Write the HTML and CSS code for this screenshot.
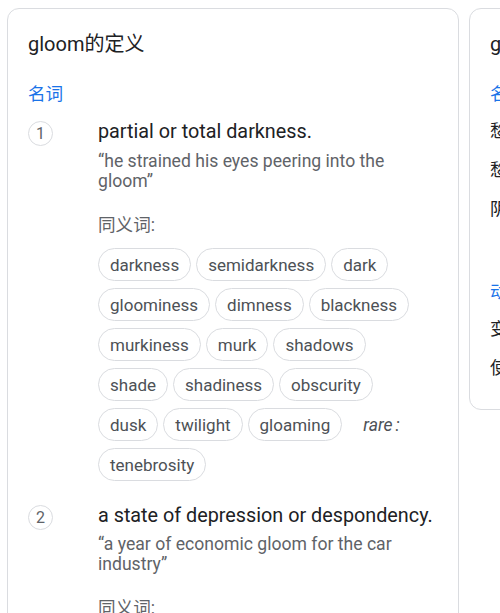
FILE: index.html
```html
<!DOCTYPE html>
<html lang="zh-CN">
<head>
<meta charset="utf-8">
<title>gloom的定义</title>
<link rel="stylesheet" href="styles.css">
</head>
<body>
<div class="cards">
  <section class="card main">
    <h2 class="title">gloom的定义</h2>
    <div class="pos">名词</div>
    <ol class="senses">
      <li class="sense">
        <span class="num">1</span>
        <div class="body">
          <div class="def">partial or total darkness.</div>
          <div class="ex">“he strained his eyes peering into the gloom”</div>
          <div class="syn-label">同义词:</div>
          <div class="chips">
            <span class="chip">darkness</span>
            <span class="chip">semidarkness</span>
            <span class="chip">dark</span>
            <span class="chip">gloominess</span>
            <span class="chip">dimness</span>
            <span class="chip">blackness</span>
            <span class="chip">murkiness</span>
            <span class="chip">murk</span>
            <span class="chip">shadows</span>
            <span class="chip">shade</span>
            <span class="chip">shadiness</span>
            <span class="chip">obscurity</span>
            <span class="chip">dusk</span>
            <span class="chip">twilight</span>
            <span class="chip">gloaming</span>
            <span class="rare">rare<span class="colon">:</span></span>
            <span class="chip">tenebrosity</span>
          </div>
        </div>
      </li>
      <li class="sense">
        <span class="num">2</span>
        <div class="body">
          <div class="def">a state of depression or despondency.</div>
          <div class="ex ex2">“a year of economic gloom for the car industry”</div>
          <div class="syn-label">同义词:</div>
        </div>
      </li>
    </ol>
  </section>
  <section class="card side">
    <h2 class="title">gloom的翻译</h2>
    <div class="pos">名词</div>
    <ul class="trans">
      <li>愁闷</li>
      <li>愁苦</li>
      <li>阴暗</li>
    </ul>
    <div class="pos pos2">动词</div>
    <ul class="trans">
      <li>变得忧郁</li>
      <li>使忧郁</li>
    </ul>
  </section>
</div>
</body>
</html>
```

FILE: styles.css
```css
html, body {
  margin: 0;
  padding: 0;
  background: #fff;
  overflow: hidden;
}
body {
  font-family: Roboto, "Noto Sans CJK SC", sans-serif;
  color: #202124;
}
.cards {
  display: flex;
  align-items: flex-start;
  gap: 10px;
  padding: 8px 0 0 7px;
  width: 800px;
}
.card {
  box-sizing: border-box;
  border: 1px solid #dadce0;
  border-radius: 12px;
  background: #fff;
  padding: 20px;
  flex: none;
}
.main {
  width: 452px;
  height: 700px;
}
.side {
  width: 220px;
  height: 402px;
}
.title {
  margin: 0;
  font-weight: 400;
  font-size: 20px;
  line-height: 30px;
  color: #202124;
}
.pos {
  margin-top: 23px;
  font-size: 17.6px;
  line-height: 24px;
  color: #1a73e8;
}
.senses {
  list-style: none;
  margin: 14px 0 0 0;
  padding: 0;
}
.sense {
  display: flex;
  margin-bottom: 23px;
}
.num {
  box-sizing: border-box;
  flex: none;
  width: 25px;
  height: 25px;
  border: 1px solid #dadce0;
  border-radius: 50%;
  display: flex;
  align-items: center;
  justify-content: center;
  font-size: 16px;
  color: #5f6368;
  margin-top: 1px;
  margin-right: 45px;
}
.body {
  flex: 1;
  min-width: 0;
}
.def {
  font-size: 19.8px;
  line-height: 24px;
  color: #202124;
}
.ex {
  margin-top: 7px;
  font-size: 17.6px;
  line-height: 20px;
  color: #5f6368;
}
.ex2 {
  margin-top: 6px;
}
.syn-label {
  margin-top: 22px;
  font-size: 17.6px;
  line-height: 24px;
  color: #5f6368;
}
.chips {
  margin-top: 11px;
  display: flex;
  flex-wrap: wrap;
  align-items: center;
  column-gap: 5px;
  row-gap: 7px;
}
.chip {
  box-sizing: border-box;
  height: 33px;
  padding: 0 11px;
  border: 1px solid #dadce0;
  border-radius: 17px;
  display: inline-flex;
  align-items: center;
  font-size: 17px;
  color: #4d5156;
}
.rare {
  font-style: italic;
  font-size: 17.6px;
  color: #4d5156;
  padding: 0 10px 0 16px;
}
.colon {
  margin-left: 3px;
}
.trans {
  list-style: none;
  margin: 6px 0 0 0;
  padding: 0;
}
.trans li {
  font-size: 17.6px;
  line-height: 39px;
  color: #202124;
}
.pos2 {
  margin-top: 51px;
}
```
